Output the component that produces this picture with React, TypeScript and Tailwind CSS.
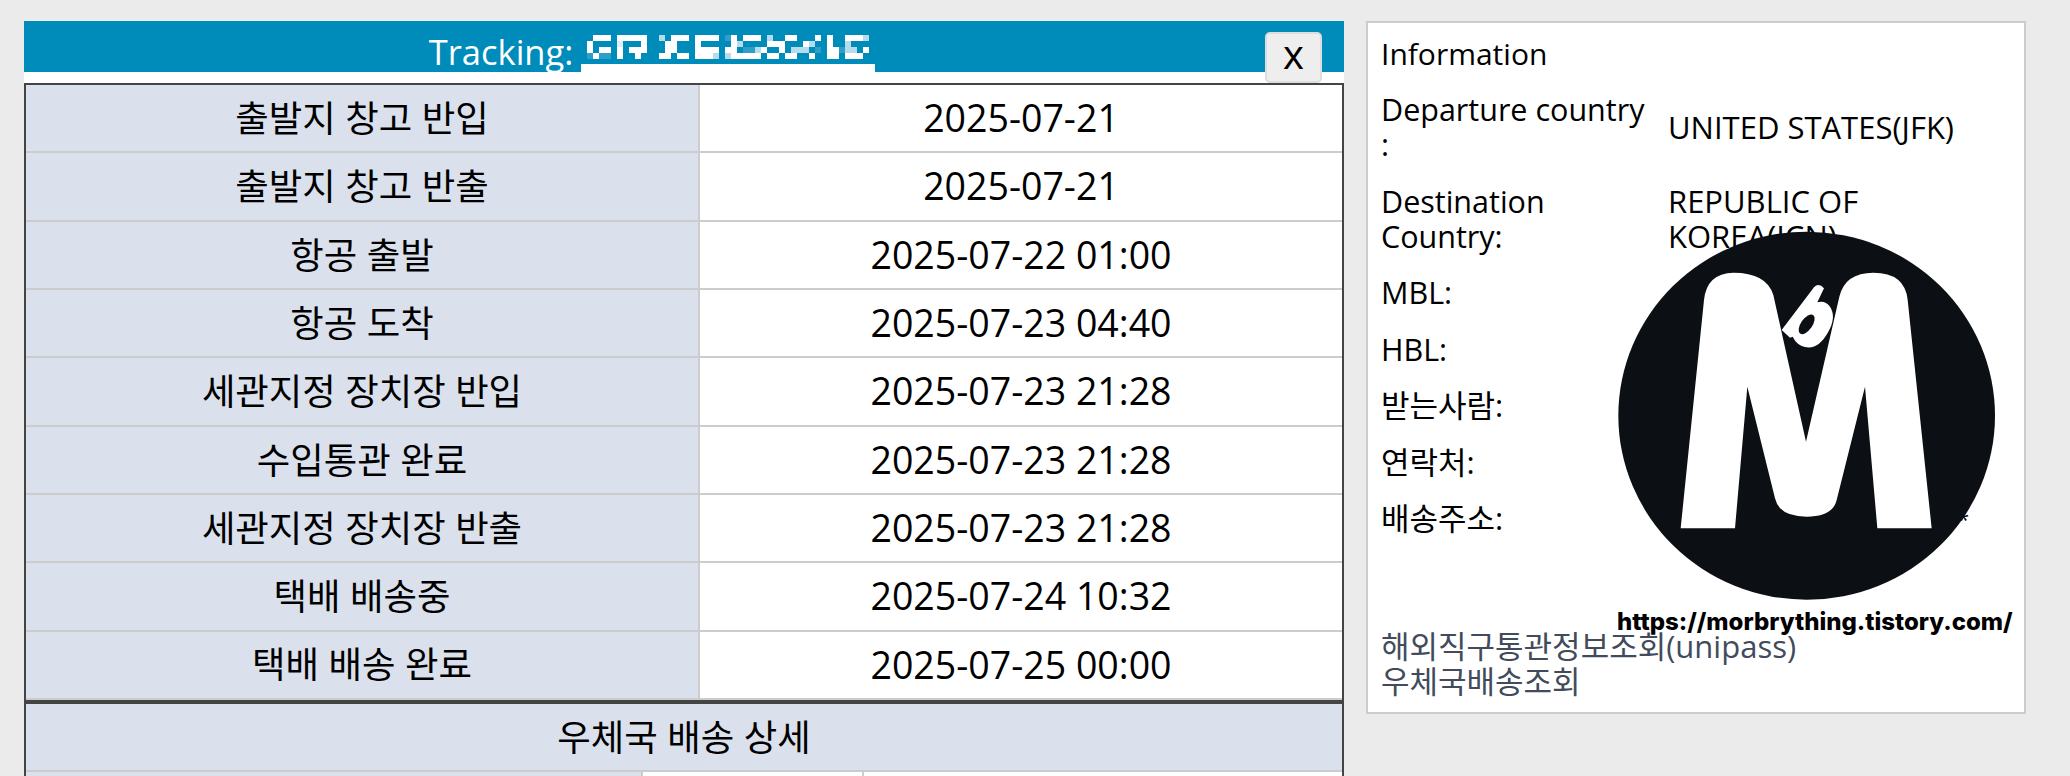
const ROWS = [
  ['출발지 창고 반입', '2025-07-21'],
  ['출발지 창고 반출', '2025-07-21'],
  ['항공 출발', '2025-07-22 01:00'],
  ['항공 도착', '2025-07-23 04:40'],
  ['세관지정 장치장 반입', '2025-07-23 21:28'],
  ['수입통관 완료', '2025-07-23 21:28'],
  ['세관지정 장치장 반출', '2025-07-23 21:28'],
  ['택배 배송중', '2025-07-24 10:32'],
  ['택배 배송 완료', '2025-07-25 00:00'],
]

// redacted tracking number, one char per 6px block
const MOSAIC = [
  '.###.#####..+.###.####.b#.###.+..##...#.#..###+',
  '#....f...#...##...#.....#+....###...#+..#..+...',
  '#.##.#.###...##...####.##.bb+#..#.+++.b.##b++.#',
  'b#bb.#..#...##.##.###+.+#####.##.##..#..##.###.',
]

const BLOCK: Record<string, string> = { '#': '#ffffff', '+': '#b5dcea', b: '#2f9fc9', f: '#dceff6' }

function Mosaic() {
  return (
    <svg width="294" height="37" viewBox="0 0 294 37" className="block self-end">
      {MOSAIC.map((row, y) =>
        row.split('').map((c, x) =>
          BLOCK[c] ? <rect key={`${x}-${y}`} x={6 + x * 6} y={y * 6} width="6" height="6" fill={BLOCK[c]} /> : null,
        ),
      )}
      <rect x="0" y="29" width="294" height="8" fill="#ffffff" />
    </svg>
  )
}

function Logo() {
  return (
    <svg width="410" height="420" viewBox="0 0 1230 1260" className="absolute left-[1610px] top-[225px]">
      <ellipse cx="590" cy="572" rx="565" ry="552" fill="#0c1015" />
      <path
        d="M212 910 L375 910 L412 485 L495 820 Q508 875 590 875 Q668 875 680 825 L765 485 L802 910 L965 910 L893 225 Q885 143 790 143 Q705 143 688 215 L588 650 L490 210 Q470 143 370 143 Q290 145 282 225 Z"
        fill="#ffffff"
      />
      <path
        d="M612 187 Q626 172 642 190 L622 232 Q645 225 660 245 Q680 275 655 320 Q625 375 585 366 Q560 360 548 335 L540 338 L515 315 Z"
        fill="#ffffff"
      />
      <ellipse cx="590" cy="298" rx="17" ry="34" transform="rotate(35 590 298)" fill="#0c1015" />
    </svg>
  )
}

function InfoRow({ label, value, latin }: { label: string; value?: string; latin?: boolean }) {
  return (
    <div className="flex items-center">
      <div className={`w-[287px] shrink-0 pr-[20px] ${latin ? 'text-[30.5px]' : ''}`}>{label}</div>
      {value && <div className="w-[300px]">{value}</div>}
    </div>
  )
}

export default function App() {
  return (
    <div className="relative h-[776px] overflow-hidden bg-[#ebebeb] flex items-start pt-[21px] pl-[24px] gap-[22px] text-black font-['Open_Sans','Noto_Sans_CJK_KR',sans-serif]">
      <div className="w-[1320px] shrink-0 bg-white">
        <div className="relative h-[51px] bg-[#008cba] text-white flex items-start justify-center pr-[64px]">
          <span className="text-[34.5px] leading-[51px] pt-[5px] mr-[8px]">Tracking:</span>
          <Mosaic />
          <button className="absolute right-[22px] top-[11px] w-[57px] h-[51px] bg-[#eeeeee] border-2 border-[#dddddd] rounded-[5px] text-black text-[40px] leading-[40px] pb-[12px]">
            x
          </button>
        </div>
        <div className="h-[11px]" />
        <div className="border-2 border-[#444444] text-[36.4px]">
          {ROWS.map(([name, date]) => (
            <div key={name} className="flex h-[68.33px] border-b-2 border-[#cccccc]">
              <div className="w-[674px] shrink-0 bg-[#dae1ec] border-r-2 border-[#cccccc] flex items-center justify-center">
                {name}
              </div>
              <div className="flex-1 flex items-center justify-center text-[37.5px]">{date}</div>
            </div>
          ))}
          <div className="border-t-4 border-[#444444]">
            <div className="h-[68px] bg-[#dae1ec] border-b-2 border-[#cccccc] flex items-center justify-center">
              우체국 배송 상세
            </div>
            <div className="flex h-[60px]">
              <div className="w-[617px] shrink-0 bg-[#dae1ec] border-r-2 border-[#cccccc]" />
              <div className="w-[221px] shrink-0 border-r-2 border-[#cccccc]" />
              <div className="flex-1" />
            </div>
          </div>
        </div>
      </div>

      <div className="w-[660px] h-[693px] shrink-0 bg-white border-2 border-[#cccccc] pl-[13px] pr-[12px] pt-[13px] text-[31px] leading-[35px]">
        <div className="text-[30px]">Information</div>
        <div className="mt-[21px] flex flex-col gap-[21.5px]">
          <InfoRow latin label="Departure country :" value="UNITED STATES(JFK)" />
          <InfoRow latin label="Destination Country:" value="REPUBLIC OF KOREA(ICN)" />
          <InfoRow latin label="MBL:" />
          <InfoRow latin label="HBL:" />
          <InfoRow label="받는사람:" />
          <InfoRow label="연락처:" />
          <InfoRow label="배송주소:" />
        </div>
        <div className="mt-[93px] text-[#414b5c]">
          <div>해외직구통관정보조회(unipass)</div>
          <div>우체국배송조회</div>
        </div>
      </div>

      <span className="absolute left-[1958px] top-[510px] text-[20px] leading-[20px]">*</span>
      <Logo />
      <span className="absolute left-[1617px] top-[604px] text-[24px] leading-[36px] font-extrabold whitespace-nowrap font-['Inter',sans-serif]">
        https://morbrything.tistory.com/
      </span>
    </div>
  )
}
